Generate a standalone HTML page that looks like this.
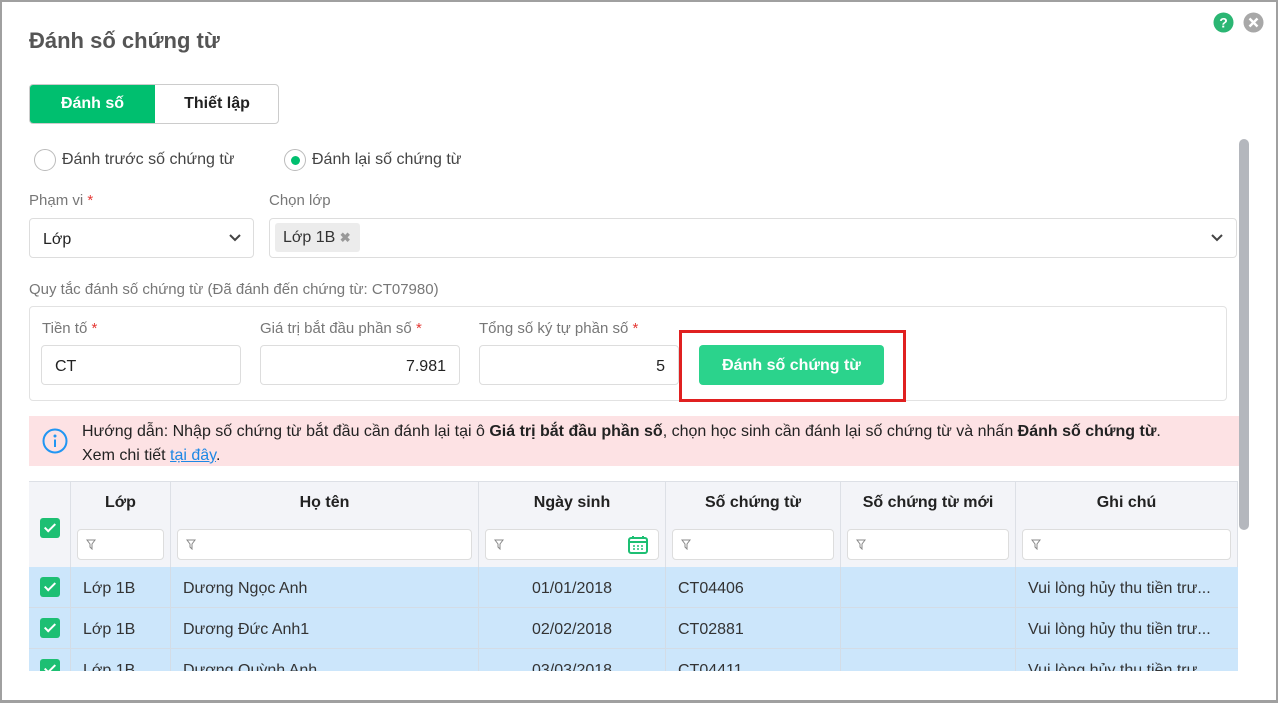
<!DOCTYPE html>
<html><head><meta charset="utf-8"><style>
*{box-sizing:border-box;margin:0;padding:0}
body{width:1278px;height:703px;overflow:hidden;background:#fff;font-family:"Liberation Sans",sans-serif;color:#222;position:relative}
.frame{position:absolute;left:0;top:0;width:1278px;height:703px;border:2px solid #a0a0a0;border-bottom-width:3px}
.a{position:absolute}
.lbl{font-size:15px;color:#777}
.req{color:#e53935}
.inp{position:absolute;border:1px solid #ddd;border-radius:4px;background:#fff;font-size:16px;color:#222}
.th{position:absolute;top:481px;height:86px;border-right:1px solid #dde0e6;background:#f3f4f8;font-weight:bold;font-size:16px;text-align:center;padding-top:13px}
.fb{position:absolute;top:48px;height:31px;background:#fff;border:1px solid #ddd;border-radius:4px;left:6px;right:6px}
.fb svg{position:absolute;left:8px;top:9px}
.row{position:absolute;left:29px;width:1209px;height:41px;background:#cce6fb;border-bottom:1px solid #d3dce6;font-size:16px;color:#333}
.row div{position:absolute;top:0;height:41px;line-height:43px;border-right:1px solid #d3dce6}
.cb{position:absolute;width:20px;height:20px;background:#1dbf73;border-radius:3px}
.cb:after{content:"";position:absolute;left:7px;top:3px;width:4px;height:9px;border:solid #fff;border-width:0 2px 2px 0;transform:rotate(45deg)}
</style></head><body>
<div class="frame"></div>
<div class="a" style="left:29px;top:28px;font-size:22px;font-weight:bold;color:#555">Đánh số chứng từ</div>
<svg class="a" style="left:1213px;top:12px" width="21" height="21"><circle cx="10.5" cy="10.5" r="10" fill="#2bb673"/><text x="10.5" y="15.5" font-size="14" font-weight="bold" fill="#fff" text-anchor="middle" font-family="Liberation Sans">?</text></svg>
<svg class="a" style="left:1243px;top:12px" width="21" height="21"><circle cx="10.5" cy="10.5" r="10" fill="#a8a8a8"/><path d="M6.5 6.5L14.5 14.5M14.5 6.5L6.5 14.5" stroke="#fff" stroke-width="2.4"/></svg>
<div class="a" style="left:29px;top:84px;width:250px;height:40px;border:1px solid #ccc;border-radius:4px;overflow:hidden;font-size:16px;font-weight:bold">
<div class="a" style="left:0;top:0;width:125px;height:40px;background:#00bf6f;color:#fff;text-align:center;line-height:38px">Đánh số</div>
<div class="a" style="left:125px;top:0;width:124px;height:40px;text-align:center;line-height:38px">Thiết lập</div></div>
<div class="a" style="left:34px;top:149px;width:22px;height:22px;border:1px solid #bbb;border-radius:50%"></div>
<div class="a" style="left:62px;top:151px;font-size:16px;color:#444">Đánh trước số chứng từ</div>
<div class="a" style="left:284px;top:149px;width:22px;height:22px;border:1px solid #bbb;border-radius:50%"><div class="a" style="left:6px;top:6px;width:9px;height:9px;border-radius:50%;background:#00bf6f"></div></div>
<div class="a" style="left:312px;top:151px;font-size:16px;color:#444">Đánh lại số chứng từ</div>
<div class="a lbl" style="left:29px;top:192px">Phạm vi <span class="req">*</span></div>
<div class="a lbl" style="left:269px;top:192px">Chọn lớp</div>
<div class="inp" style="left:29px;top:218px;width:225px;height:40px;padding:12px 13px">Lớp</div>
<svg class="a" style="left:229px;top:233px" width="12" height="9"><path d="M1 2L6 7L11 2" stroke="#444" stroke-width="2" fill="none"/></svg>
<div class="inp" style="left:269px;top:218px;width:968px;height:40px"></div>
<div class="a" style="left:275px;top:223px;width:85px;height:29px;background:#ececec;border-radius:3px;font-size:16px;color:#333;padding:6px 8px">Lớp 1B <span style="color:#999;font-size:13px;font-weight:bold">✖</span></div>
<svg class="a" style="left:1211px;top:233px" width="12" height="9"><path d="M1 2L6 7L11 2" stroke="#444" stroke-width="2" fill="none"/></svg>
<div class="a" style="left:1239px;top:139px;width:10px;height:391px;background:#b4b7bd;border-radius:5px"></div>
<div class="a lbl" style="left:29px;top:281px">Quy tắc đánh số chứng từ (Đã đánh đến chứng từ: CT07980)</div>
<div class="a" style="left:29px;top:306px;width:1198px;height:95px;border:1px solid #e2e2e2;border-radius:4px"></div>
<div class="a lbl" style="left:42px;top:320px">Tiền tố <span class="req">*</span></div>
<div class="a lbl" style="left:260px;top:320px">Giá trị bắt đầu phần số <span class="req">*</span></div>
<div class="a lbl" style="left:479px;top:320px">Tổng số ký tự phần số <span class="req">*</span></div>
<div class="inp" style="left:41px;top:345px;width:200px;height:40px;padding:12px 13px">CT</div>
<div class="inp" style="left:260px;top:345px;width:200px;height:40px;padding:12px 13px;text-align:right">7.981</div>
<div class="inp" style="left:479px;top:345px;width:200px;height:40px;padding:12px 13px;text-align:right">5</div>
<div class="a" style="left:679px;top:330px;width:227px;height:72px;border:3px solid #e02020"></div>
<div class="a" style="left:699px;top:345px;width:185px;height:40px;background:#2bd38c;border-radius:4px;color:#fff;font-weight:bold;font-size:16px;text-align:center;line-height:42px">Đánh số chứng từ</div>
<div class="a" style="left:29px;top:416px;width:1210px;height:50px;background:#fde2e4"></div>
<svg class="a" style="left:42px;top:428px" width="26" height="26"><circle cx="13" cy="13" r="11.5" stroke="#2196f3" stroke-width="2" fill="none"/><circle cx="13" cy="8" r="1.5" fill="#2196f3"/><path d="M13 11.5V19" stroke="#2196f3" stroke-width="2"/></svg>
<div class="a" style="left:82px;top:420px;font-size:16px;line-height:24px;color:#222">Hướng dẫn: Nhập số chứng từ bắt đầu cần đánh lại tại ô <b>Giá trị bắt đầu phần số</b>, chọn học sinh cần đánh lại số chứng từ và nhấn <b>Đánh số chứng từ</b>.<br>Xem chi tiết <span style="color:#1e88e5;text-decoration:underline">tại đây</span>.</div>
<div class="a" style="left:29px;top:481px;width:1209px;height:1px;background:#dde0e6;z-index:2"></div>
<div class="th" style="left:29px;width:42px"><div class="cb" style="left:11px;top:37px"></div></div>
<div class="th" style="left:71px;width:100px">Lớp<div class="fb"><svg width="10" height="11"><path d="M1 1H9L6 5V10L4 8V5Z" fill="none" stroke="#888"/></svg></div></div>
<div class="th" style="left:171px;width:308px">Họ tên<div class="fb"><svg width="10" height="11"><path d="M1 1H9L6 5V10L4 8V5Z" fill="none" stroke="#888"/></svg></div></div>
<div class="th" style="left:479px;width:187px">Ngày sinh<div class="fb"><svg width="10" height="11"><path d="M1 1H9L6 5V10L4 8V5Z" fill="none" stroke="#888"/></svg><svg style="left:142px;top:5px" width="20" height="19"><rect x="1" y="3" width="18" height="15" rx="2" fill="none" stroke="#1dbf73" stroke-width="2"/><path d="M1 7H19M5 1V4M15 1V4" stroke="#1dbf73" stroke-width="2"/><path d="M5 11h2M9 11h2M13 11h2M5 14h2M9 14h2M13 14h2" stroke="#1dbf73" stroke-width="1.5"/></svg></div></div>
<div class="th" style="left:666px;width:175px">Số chứng từ<div class="fb"><svg width="10" height="11"><path d="M1 1H9L6 5V10L4 8V5Z" fill="none" stroke="#888"/></svg></div></div>
<div class="th" style="left:841px;width:175px">Số chứng từ mới<div class="fb"><svg width="10" height="11"><path d="M1 1H9L6 5V10L4 8V5Z" fill="none" stroke="#888"/></svg></div></div>
<div class="th" style="left:1016px;width:222px">Ghi chú<div class="fb"><svg width="10" height="11"><path d="M1 1H9L6 5V10L4 8V5Z" fill="none" stroke="#888"/></svg></div></div>
<div class="a" style="left:29px;top:567px;width:1209px;height:104px;overflow:hidden">
<div class="row" style="left:0;top:0"><div style="left:0;width:42px"><span class="cb" style="left:11px;top:10px"></span></div><div style="left:42px;width:100px;padding-left:12px">Lớp 1B</div><div style="left:142px;width:308px;padding-left:12px">Dương Ngọc Anh</div><div style="left:450px;width:187px;text-align:center">01/01/2018</div><div style="left:637px;width:175px;padding-left:12px">CT04406</div><div style="left:812px;width:175px"></div><div style="left:987px;width:222px;padding-left:12px;border:0">Vui lòng hủy thu tiền trư...</div></div>
<div class="row" style="left:0;top:41px"><div style="left:0;width:42px"><span class="cb" style="left:11px;top:10px"></span></div><div style="left:42px;width:100px;padding-left:12px">Lớp 1B</div><div style="left:142px;width:308px;padding-left:12px">Dương Đức Anh1</div><div style="left:450px;width:187px;text-align:center">02/02/2018</div><div style="left:637px;width:175px;padding-left:12px">CT02881</div><div style="left:812px;width:175px"></div><div style="left:987px;width:222px;padding-left:12px;border:0">Vui lòng hủy thu tiền trư...</div></div>
<div class="row" style="left:0;top:82px"><div style="left:0;width:42px"><span class="cb" style="left:11px;top:10px"></span></div><div style="left:42px;width:100px;padding-left:12px">Lớp 1B</div><div style="left:142px;width:308px;padding-left:12px">Dương Quỳnh Anh</div><div style="left:450px;width:187px;text-align:center">03/03/2018</div><div style="left:637px;width:175px;padding-left:12px">CT04411</div><div style="left:812px;width:175px"></div><div style="left:987px;width:222px;padding-left:12px;border:0">Vui lòng hủy thu tiền trư...</div></div>
</div>
</body></html>
